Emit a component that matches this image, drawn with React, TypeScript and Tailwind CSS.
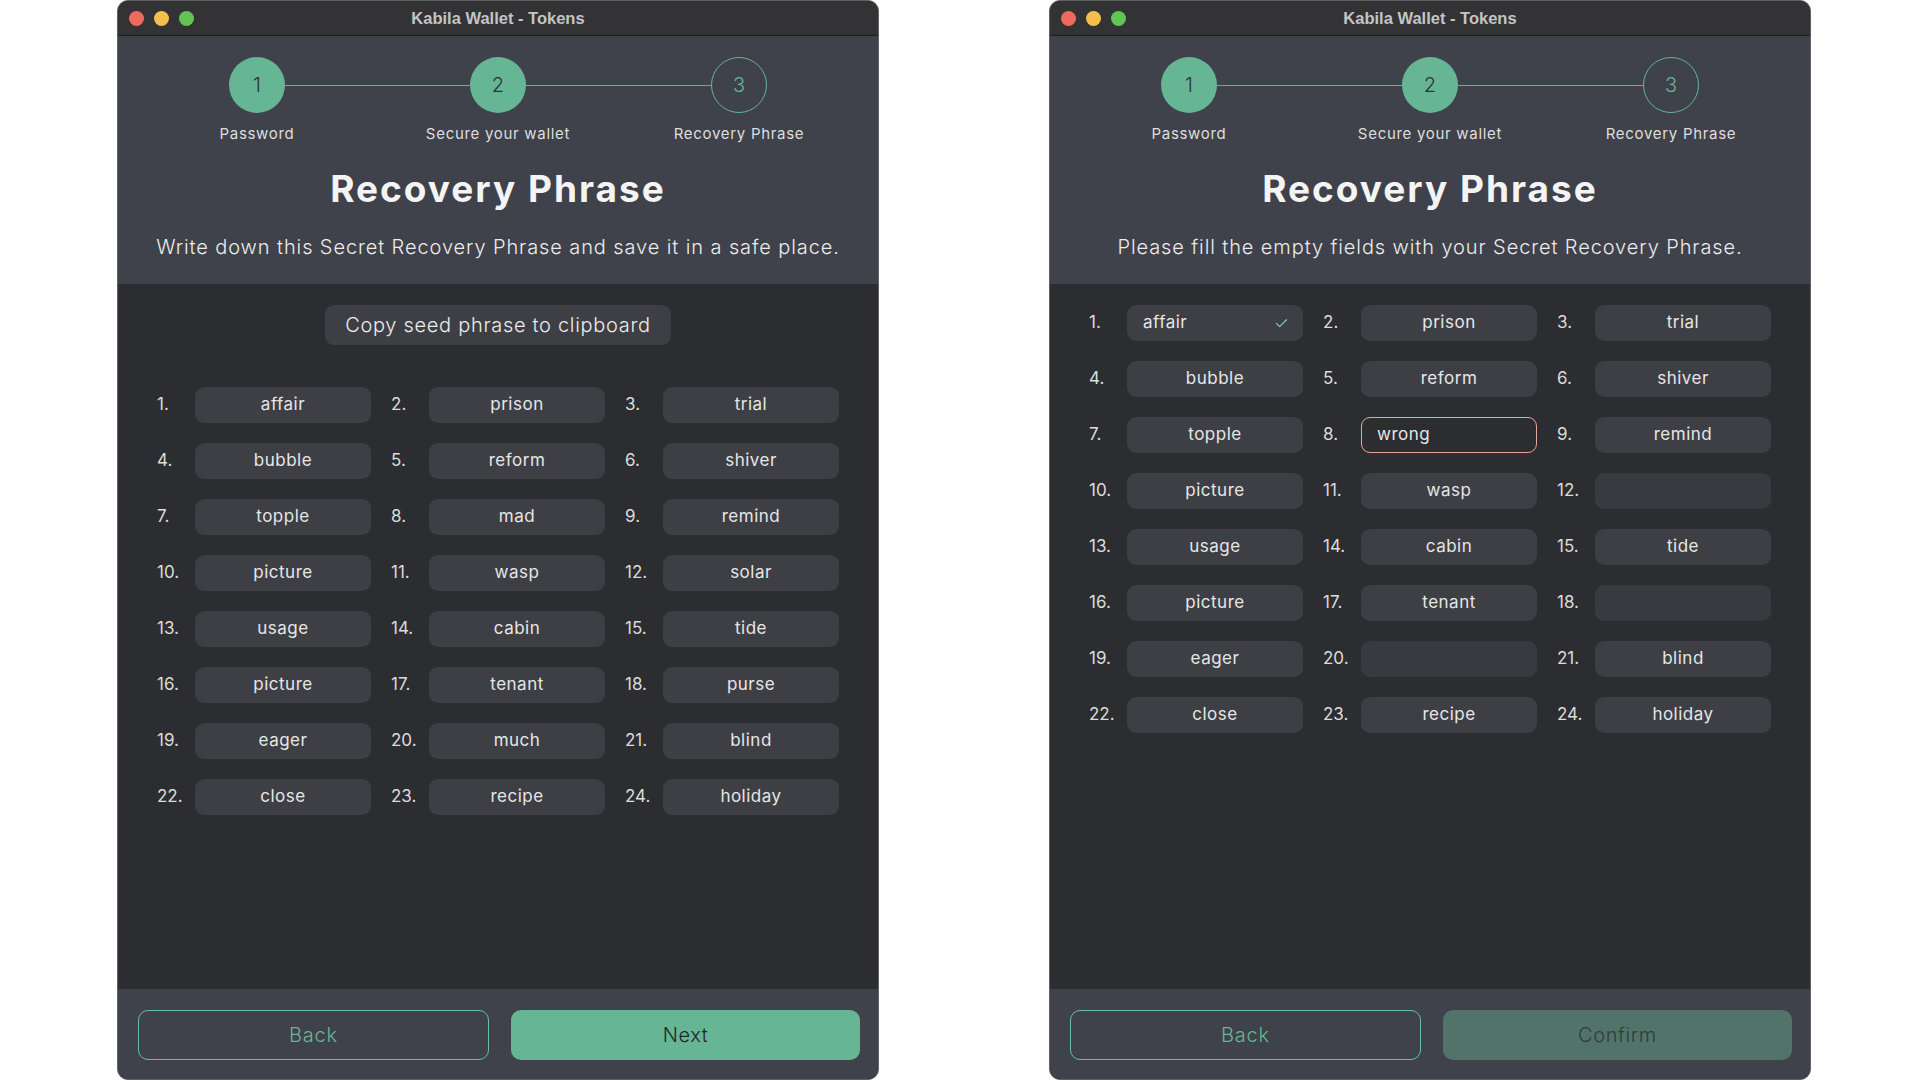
import { Check } from "lucide-react";

type Cell = { word: string; state?: "ok" | "wrong" | "empty" };

const leftWords = [
  "affair", "prison", "trial", "bubble", "reform", "shiver", "topple", "mad",
  "remind", "picture", "wasp", "solar", "usage", "cabin", "tide", "picture",
  "tenant", "purse", "eager", "much", "blind", "close", "recipe", "holiday",
];

const rightCells: Cell[] = leftWords.map((w, i) => {
  if (i === 0) return { word: w, state: "ok" };
  if (i === 7) return { word: "wrong", state: "wrong" };
  if (i === 11 || i === 17 || i === 19) return { word: "", state: "empty" };
  return { word: w };
});

const font = { fontFamily: "Inter, 'Noto Sans', sans-serif" };

function TitleBar() {
  return (
    <div className="grid h-[35px] shrink-0 grid-cols-[1fr_auto_1fr] items-center border-b border-[#1d1d1f] bg-[#333336] px-[11px]">
      <div className="flex gap-[10px]">
        <span className="h-[15px] w-[15px] rounded-full bg-[#ee6a5e]" />
        <span className="h-[15px] w-[15px] rounded-full bg-[#f5bf4f]" />
        <span className="h-[15px] w-[15px] rounded-full bg-[#61c554]" />
      </div>
      <span
        className="text-[16.5px] font-bold text-[#c4c4c4]"
        style={{ fontFamily: "'Liberation Sans', Arial, sans-serif" }}
      >
        Kabila Wallet - Tokens
      </span>
      <div />
    </div>
  );
}

function Step({ n, label, done, first, last }: { n: number; label: string; done: boolean; first?: boolean; last?: boolean }) {
  return (
    <div className="flex flex-col items-center">
      <div className="flex w-full items-center">
        <div className={`h-px flex-1 ${first ? "bg-transparent" : "bg-[#5fb592]"}`} />
        <div
          className={`flex h-[56px] w-[56px] items-center justify-center rounded-full text-[20px] font-light ${
            done ? "bg-[#66b696] text-[#2f3236]" : "border-[1.5px] border-[#66b696] text-[#66b696]"
          }`}
        >
          {n}
        </div>
        <div className={`h-px flex-1 ${last ? "bg-transparent" : "bg-[#5fb592]"}`} />
      </div>
      <span className="mt-[11px] text-[15px] leading-[20px] tracking-[0.7px] text-[#dedede]">{label}</span>
    </div>
  );
}

function Header({ subtitle }: { subtitle: string }) {
  return (
    <div className="flex h-[248px] shrink-0 flex-col items-center bg-[#3f424a] pt-[21px]">
      <div className="grid w-[723px] grid-cols-3">
        <Step n={1} label="Password" done first />
        <Step n={2} label="Secure your wallet" done />
        <Step n={3} label="Recovery Phrase" done={false} last />
      </div>
      <h1 className="mt-[22px] text-[37px] font-bold leading-[46px] tracking-[2px] text-[#f4f4f4]">Recovery Phrase</h1>
      <p className="mt-[21px] text-[20px] font-light leading-[28px] tracking-[0.9px] text-[#ececec]">{subtitle}</p>
    </div>
  );
}

const wordText = "text-[17px] tracking-[0.5px] text-[#e6e6e6]";

function WordBox({ cell }: { cell: Cell }) {
  if (cell.state === "ok") {
    return (
      <div className={`flex h-[36px] w-[176px] items-center justify-between rounded-[9px] bg-[#3e3f44] pl-[16px] pr-[14px] ${wordText}`}>
        {cell.word}
        <Check size={15} strokeWidth={2} className="text-[#7cc9a6]" />
      </div>
    );
  }
  if (cell.state === "wrong") {
    return (
      <div className={`flex h-[36px] w-[176px] items-center rounded-[9px] border border-[#e8a69b] bg-[#2c2d31] pl-[15px] ${wordText}`}>
        {cell.word}
      </div>
    );
  }
  if (cell.state === "empty") {
    return <div className="h-[36px] w-[176px] rounded-[9px] bg-[#393a3f]" />;
  }
  return (
    <div className={`flex h-[36px] w-[176px] items-center justify-center rounded-[9px] bg-[#3e3f44] ${wordText}`}>
      {cell.word}
    </div>
  );
}

function WordGrid({ cells }: { cells: Cell[] }) {
  return (
    <div className="mx-auto grid w-[682px] grid-cols-3 gap-x-[20px] gap-y-[20px]">
      {cells.map((c, i) => (
        <div key={i} className="flex items-center">
          <span className="w-[38px] text-[17px] text-[#dcdcdc]">{i + 1}.</span>
          <WordBox cell={c} />
        </div>
      ))}
    </div>
  );
}

function Footer({ next, disabled }: { next: string; disabled?: boolean }) {
  return (
    <div className="flex h-[90px] shrink-0 gap-[22px] bg-[#3f424a] pl-[20px] pr-[18px] pt-[21px]">
      <button className="h-[50px] flex-1 rounded-[10px] border-[1.5px] border-[#66c29e] text-[20px] font-light tracking-[0.8px] text-[#66b696]">
        Back
      </button>
      <button
        className={`h-[50px] flex-1 rounded-[10px] text-[20px] font-light tracking-[0.6px] ${
          disabled ? "bg-[#52736a] text-[#323b3b]" : "bg-[#66b696] text-[#23262a]"
        }`}
      >
        {next}
      </button>
    </div>
  );
}

function Window({ children }: { children: React.ReactNode }) {
  return (
    <div className="flex h-[1080px] w-[762px] flex-col overflow-hidden rounded-[11px] border border-[#626266] bg-[#2c2d31]">
      {children}
    </div>
  );
}

export default function App() {
  return (
    <div className="flex h-[1080px] w-[1920px] gap-[170px] bg-white pl-[117px]" style={font}>
      <Window>
        <TitleBar />
        <Header subtitle="Write down this Secret Recovery Phrase and save it in a safe place." />
        <div className="flex flex-1 flex-col">
          <button className="mx-auto mt-[21px] h-[40px] w-[346px] rounded-[9px] bg-[#3e3f44] text-[20px] font-light tracking-[0.7px] text-[#ececec]">
            Copy seed phrase to clipboard
          </button>
          <div className="mt-[42px]">
            <WordGrid cells={leftWords.map((w) => ({ word: w }))} />
          </div>
        </div>
        <Footer next="Next" />
      </Window>
      <Window>
        <TitleBar />
        <Header subtitle="Please fill the empty fields with your Secret Recovery Phrase." />
        <div className="flex flex-1 flex-col pt-[21px]">
          <WordGrid cells={rightCells} />
        </div>
        <Footer next="Confirm" disabled />
      </Window>
    </div>
  );
}
